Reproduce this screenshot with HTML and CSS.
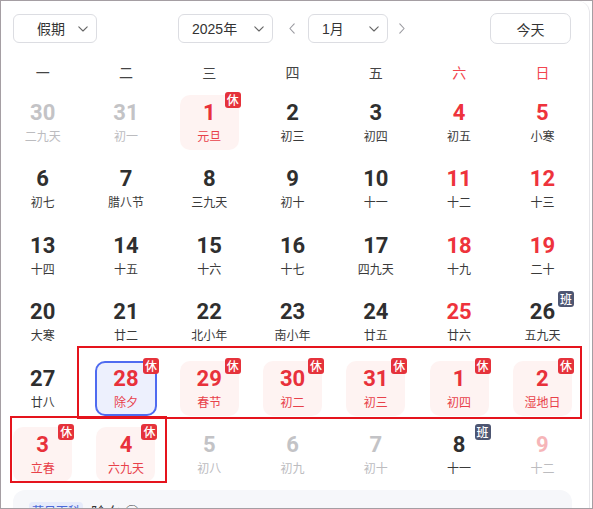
FILE: index.html
```html
<!DOCTYPE html>
<html lang="zh-CN">
<head>
<meta charset="utf-8">
<title>万年历</title>
<link rel="stylesheet" href="styles.css">
</head>
<body>
<div class="frame">
  <div class="card">
    <div class="toolbar">
      <div class="select select-holiday"><span>假期</span><svg class="chev" width="10" height="6" viewBox="0 0 10 6"><path d="M0.8 0.8 L5 5 L9.2 0.8"/></svg></div>
      <div class="select select-year"><span>2025年</span><svg class="chev" width="10" height="6" viewBox="0 0 10 6"><path d="M0.8 0.8 L5 5 L9.2 0.8"/></svg></div>
      <span class="arrow arrow-prev"><svg width="6" height="11" viewBox="0 0 6 11"><path d="M5.2 0.8 L0.9 5.5 L5.2 10.2"/></svg></span>
      <div class="select select-month"><span>1月</span><svg class="chev" width="10" height="6" viewBox="0 0 10 6"><path d="M0.8 0.8 L5 5 L9.2 0.8"/></svg></div>
      <span class="arrow arrow-next"><svg width="6" height="11" viewBox="0 0 6 11"><path d="M0.8 0.8 L5.1 5.5 L0.8 10.2"/></svg></span>
      <div class="today">今天</div>
    </div>

    <div class="weekdays">
      <span>一</span><span>二</span><span>三</span><span>四</span><span>五</span><span class="we">六</span><span class="we">日</span>
    </div>

    <div class="days">
      <div class="day"><div class="box muted"><b>30</b><i>二九天</i></div></div>
      <div class="day"><div class="box muted"><b>31</b><i>初一</i></div></div>
      <div class="day"><div class="box holiday"><b>1</b><i>元旦</i><em class="badge">休</em></div></div>
      <div class="day"><div class="box"><b>2</b><i>初三</i></div></div>
      <div class="day"><div class="box"><b>3</b><i>初四</i></div></div>
      <div class="day"><div class="box weekend"><b>4</b><i>初五</i></div></div>
      <div class="day"><div class="box weekend"><b>5</b><i>小寒</i></div></div>

      <div class="day"><div class="box"><b>6</b><i>初七</i></div></div>
      <div class="day"><div class="box"><b>7</b><i>腊八节</i></div></div>
      <div class="day"><div class="box"><b>8</b><i>三九天</i></div></div>
      <div class="day"><div class="box"><b>9</b><i>初十</i></div></div>
      <div class="day"><div class="box"><b>10</b><i>十一</i></div></div>
      <div class="day"><div class="box weekend"><b>11</b><i>十二</i></div></div>
      <div class="day"><div class="box weekend"><b>12</b><i>十三</i></div></div>

      <div class="day"><div class="box"><b>13</b><i>十四</i></div></div>
      <div class="day"><div class="box"><b>14</b><i>十五</i></div></div>
      <div class="day"><div class="box"><b>15</b><i>十六</i></div></div>
      <div class="day"><div class="box"><b>16</b><i>十七</i></div></div>
      <div class="day"><div class="box"><b>17</b><i>四九天</i></div></div>
      <div class="day"><div class="box weekend"><b>18</b><i>十九</i></div></div>
      <div class="day"><div class="box weekend"><b>19</b><i>二十</i></div></div>

      <div class="day"><div class="box"><b>20</b><i>大寒</i></div></div>
      <div class="day"><div class="box"><b>21</b><i>廿二</i></div></div>
      <div class="day"><div class="box"><b>22</b><i>北小年</i></div></div>
      <div class="day"><div class="box"><b>23</b><i>南小年</i></div></div>
      <div class="day"><div class="box"><b>24</b><i>廿五</i></div></div>
      <div class="day"><div class="box weekend"><b>25</b><i>廿六</i></div></div>
      <div class="day"><div class="box"><b>26</b><i>五九天</i><em class="badge work">班</em></div></div>

      <div class="day"><div class="box"><b>27</b><i>廿八</i></div></div>
      <div class="day"><div class="box holiday selected"><b>28</b><i>除夕</i><em class="badge">休</em></div></div>
      <div class="day"><div class="box holiday"><b>29</b><i>春节</i><em class="badge">休</em></div></div>
      <div class="day"><div class="box holiday"><b>30</b><i>初二</i><em class="badge">休</em></div></div>
      <div class="day"><div class="box holiday"><b>31</b><i>初三</i><em class="badge">休</em></div></div>
      <div class="day"><div class="box holiday"><b>1</b><i>初四</i><em class="badge">休</em></div></div>
      <div class="day"><div class="box holiday"><b>2</b><i>湿地日</i><em class="badge">休</em></div></div>

      <div class="day"><div class="box holiday"><b>3</b><i>立春</i><em class="badge">休</em></div></div>
      <div class="day"><div class="box holiday"><b>4</b><i>六九天</i><em class="badge">休</em></div></div>
      <div class="day"><div class="box muted"><b>5</b><i>初八</i></div></div>
      <div class="day"><div class="box muted"><b>6</b><i>初九</i></div></div>
      <div class="day"><div class="box muted"><b>7</b><i>初十</i></div></div>
      <div class="day"><div class="box"><b>8</b><i>十一</i><em class="badge work">班</em></div></div>
      <div class="day"><div class="box muted muted-weekend"><b>9</b><i>十二</i></div></div>
    </div>

    <div class="info">
      <span class="tag">节日百科</span><span class="info-title">除夕 ②</span>
    </div>
  </div>
  <div class="mark mark-week"></div>
  <div class="mark mark-pair"></div>
</div>
</body>
</html>
```

FILE: styles.css
```css
* { box-sizing: border-box; }

html, body {
  margin: 0;
  padding: 0;
  background: #fff;
}

body {
  font-family: "Noto Sans CJK SC", "Noto Sans", sans-serif;
  color: #333;
}

.frame {
  position: relative;
  width: 593px;
  height: 509px;
  border: 1px solid #a59ea3;
  overflow: hidden;
  background: #fff;
}

.card {
  width: 589px;
  height: 530px;
  padding-top: 13px;
  border-right: 1px solid #e6e6ea;
  border-top-right-radius: 12px;
  background: #fff;
}

/* toolbar */
.toolbar {
  display: flex;
  align-items: center;
  height: 29px;
  padding: 0 18px 0 12px;
}

.select {
  height: 29px;
  display: flex;
  align-items: center;
  justify-content: space-between;
  border: 1px solid #dcdde2;
  border-radius: 6px;
  font-size: 14px;
  color: #333;
  font-family: "Liberation Sans", "Noto Sans CJK SC", sans-serif;
}

.select span { line-height: 1; }

.chev path,
.arrow path {
  fill: none;
  stroke: #666;
  stroke-width: 1.1;
  stroke-linecap: round;
  stroke-linejoin: round;
}

.arrow path { stroke: #9a9aa0; }

.select-holiday {
  width: 84px;
  padding: 0 8px 0 23px;
}

.select-year {
  width: 95px;
  margin-left: 81px;
  padding: 0 8px 0 13px;
}

.select-month {
  width: 80px;
  margin-left: 9px;
  padding: 0 8px 0 13px;
}

.arrow {
  display: flex;
  align-items: center;
  justify-content: center;
  width: 14px;
  height: 29px;
}

.arrow-prev { margin-left: 12px; }
.arrow-next { margin-left: 7px; }

.today {
  margin-left: auto;
  width: 81px;
  height: 31px;
  display: flex;
  align-items: center;
  justify-content: center;
  border: 1px solid #dcdde2;
  border-radius: 7px;
  font-size: 14px;
  color: #333;
}

/* week header */
.weekdays {
  display: grid;
  grid-template-columns: repeat(7, 83.3px);
  margin-top: 18px;
  height: 22px;
  line-height: 22px;
  font-size: 14px;
  color: #444;
  text-align: center;
}

.weekdays .we { color: #f2464f; }

/* day grid */
.days {
  display: grid;
  grid-template-columns: repeat(7, 83.3px);
  grid-auto-rows: 55px;
  row-gap: 11.4px;
  margin-top: 12px;
}

.day {
  display: flex;
  justify-content: center;
}

.box {
  position: relative;
  width: 59px;
  height: 55px;
  border-radius: 10px;
  display: flex;
  flex-direction: column;
  align-items: center;
  padding-top: 5px;
}

.box b {
  display: block;
  font-family: Roboto, "Liberation Sans", sans-serif;
  font-weight: 700;
  font-size: 22px;
  line-height: 26px;
  color: #2f2f2f;
}

.box i {
  display: block;
  font-style: normal;
  font-size: 12px;
  line-height: 16px;
  margin-top: 2px;
  color: #3a3a3a;
}

.box.weekend b { color: #ee333c; }

.box.muted b { color: #c3c3c6; }
.box.muted i { color: #bcbcbf; }
.box.muted-weekend b { color: #f6b5b8; }

.box.holiday { background: #fef3f2; }
.box.holiday b { color: #e8313b; }
.box.holiday i { color: #e8414a; }

.box.selected {
  width: 62px;
  background: #edf0fd;
  border: 2px solid #4f6bf0;
  padding-top: 3px;
}

.badge {
  position: absolute;
  top: -3px;
  right: -2px;
  width: 16px;
  height: 16px;
  border-radius: 3px;
  background: #e5323b;
  color: #fff;
  font-style: normal;
  font-size: 12px;
  line-height: 16px;
  text-align: center;
  font-weight: 500;
}

.box.selected .badge { top: -5px; right: -4px; }

.badge.work { background: #4d5672; }

/* info panel */
.info {
  margin: 8px 0 0 12px;
  width: 559px;
  height: 60px;
  padding: 12px 16px;
  border-radius: 12px;
  background: #f6f7fa;
  display: flex;
  align-items: flex-start;
}

.tag {
  font-size: 12px;
  line-height: 18px;
  padding: 0 3px;
  border-radius: 4px;
  background: #e6ebfb;
  color: #4a68d8;
}

.info-title {
  margin-left: 8px;
  font-size: 15px;
  line-height: 20px;
  color: #333;
}

/* annotation marks */
.mark {
  position: absolute;
  border: 2px solid #e5141d;
}

.mark-week {
  left: 76px;
  top: 345px;
  width: 505px;
  height: 73px;
}

.mark-pair {
  left: 9px;
  top: 415px;
  width: 157px;
  height: 67px;
}
```
